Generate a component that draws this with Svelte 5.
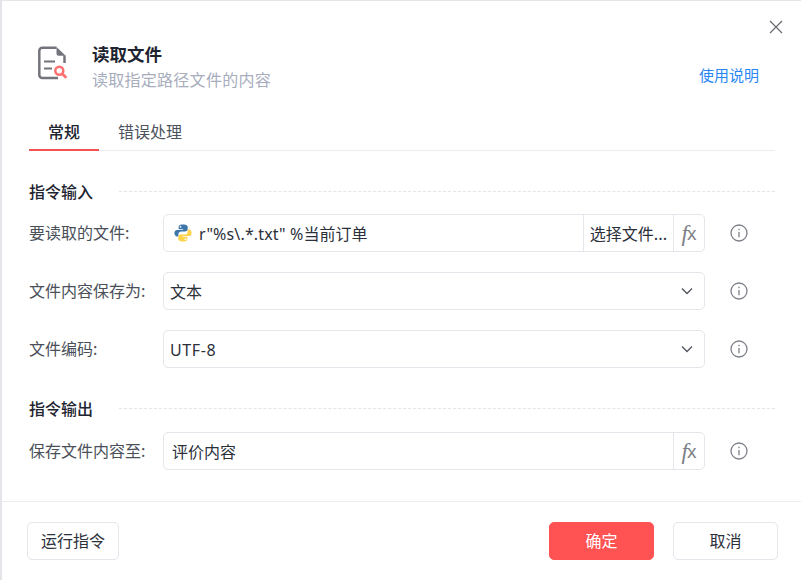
<script>
  const rows1 = [
    { label: '文件内容保存为:', value: '文本', latin: false },
    { label: '文件编码:', value: 'UTF-8', latin: true }
  ];
</script>

{#snippet info()}
  <svg class="info" width="18" height="18" viewBox="0 0 18 18" fill="none" stroke="#7d8087" stroke-width="1.3">
    <circle cx="9" cy="9" r="8" />
    <path d="M9 8v5.2" />
    <path d="M9 4.8v1.4" />
  </svg>
{/snippet}

{#snippet fx()}
  <span class="fx"><i>f</i><span>x</span></span>
{/snippet}

<div class="dialog">
  <button class="close" aria-label="关闭">
    <svg width="14" height="14" viewBox="0 0 14 14" stroke="#6b6d72" stroke-width="1.3" fill="none">
      <path d="M1 1l12 12M13 1L1 13" />
    </svg>
  </button>

  <header class="head">
    <svg class="logo" width="32" height="35" viewBox="0 0 32 35" fill="none">
      <path d="M19.500 1.800H5.300a3 3 0 0 0-3 3v24.200a3 3 0 0 0 3 3H21" stroke="#74757c" stroke-width="2.500" />
      <path d="M27.500 17V9.500" stroke="#74757c" stroke-width="2.500" />
      <path d="M19.500 1L28.700 9.800H21.500a2 2 0 0 1-2-2z" fill="#74757c" />
      <path d="M7 15.500h11M7 22.500h8" stroke="#74757c" stroke-width="2.200" />
      <circle cx="22.300" cy="24.700" r="4" stroke="#ff6f6f" stroke-width="2.500" />
      <path d="M25.300 27.800l4 3.900" stroke="#ff6f6f" stroke-width="2.800" />
    </svg>
    <div class="titles">
      <h1>读取文件</h1>
      <p>读取指定路径文件的内容</p>
    </div>
    <a class="help" href="#help">使用说明</a>
  </header>

  <nav class="tabs">
    <span class="tab active">常规</span>
    <span class="tab">错误处理</span>
  </nav>

  <section class="form">
    <div class="section-title first"><strong>指令输入</strong><span class="dash"></span></div>

    <div class="row">
      <label for="f1">要读取的文件:</label>
      <div class="control">
        <svg class="py" width="18" height="18" viewBox="0 0 18 18">
          <path d="M8.900 0.500C5.400 0.500 4.600 2 4.600 3.300v1.900h4.500v.7H2.900C1.400 5.900 0.400 7.200 0.400 9.100s1 3.300 2.400 3.300h1.600v-2.100c0-1.600 1.300-2.900 2.900-2.900h4.200c1.200 0 2.200-1 2.200-2.300V3c0-1.300-1.100-2.500-4.800-2.500z" fill="#3d77aa" />
          <circle cx="6.500" cy="2.800" r=".9" fill="#fff" />
          <path d="M9.100 17.500c3.500 0 4.300-1.500 4.300-2.800v-1.900H8.900v-.7h6.200c1.500 0 2.500-1.300 2.500-3.200s-1-3.300-2.400-3.300h-1.600v2.100c0 1.600-1.300 2.900-2.900 2.900H6.500c-1.200 0-2.200 1-2.200 2.300V15c0 1.300 1.100 2.500 4.800 2.500z" fill="#fdd34a" />
          <circle cx="11.500" cy="15.200" r=".9" fill="#fff" />
        </svg>
        <span class="value" id="f1"><span class="latin">r"%s\.*.txt" %</span>当前订单</span>
        <span class="cell pick">选择文件...</span>
        <span class="cell fxcell">{@render fx()}</span>
      </div>
      {@render info()}
    </div>

    {#each rows1 as row}
      <div class="row">
        <label for={row.label}>{row.label}</label>
        <div class="control select">
          <span class="value" class:latin={row.latin} id={row.label}>{row.value}</span>
          <svg class="chev" width="12" height="8" viewBox="0 0 12 8" fill="none" stroke="#50555e" stroke-width="1.3">
            <path d="M1 1.500l5 5 5-5" />
          </svg>
        </div>
        {@render info()}
      </div>
    {/each}

    <div class="section-title second"><strong>指令输出</strong><span class="dash"></span></div>

    <div class="row">
      <label for="f4">保存文件内容至:</label>
      <div class="control">
        <span class="value plain" id="f4">评价内容</span>
        <span class="cell fxcell">{@render fx()}</span>
      </div>
      {@render info()}
    </div>
  </section>

  <footer class="foot">
    <button class="btn run">运行指令</button>
    <div class="right">
      <button class="btn primary">确定</button>
      <button class="btn cancel">取消</button>
    </div>
  </footer>
</div>

<style>
  :global(body) {
    margin: 0;
    background: #fff;
  }
  .dialog {
    position: relative;
    box-sizing: border-box;
    width: 801px;
    height: 580px;
    background: #fff;
    border-top: 1px solid #e4e5e9;
    border-left: 2px solid #e4e5e9;
    font-family: "Noto Sans CJK SC", "Noto Sans", sans-serif;
    color: #2b303a;
    display: flex;
    flex-direction: column;
    overflow: hidden;
  }
  .close {
    position: absolute;
    top: 19px;
    right: 18px;
    padding: 0;
    border: 0;
    background: none;
    width: 14px;
    height: 14px;
    display: flex;
  }
  .head {
    display: flex;
    align-items: flex-start;
    height: 115px;
    box-sizing: border-box;
    padding: 43px 42px 0 35px;
  }
  .logo {
    flex: none;
    margin-top: 2px;
  }
  .titles {
    margin-left: 23px;
    flex: 1;
  }
  h1 {
    margin: 0;
    font-size: 17.5px;
    line-height: 20px;
    font-weight: 700;
    color: #1e2430;
  }
  .titles p {
    margin: 5px 0 0;
    font-size: 16px;
    letter-spacing: .27px;
    line-height: 21px;
    color: #a7adbd;
  }
  .help {
    margin-top: 21px;
    font-size: 15px;
    line-height: 20px;
    color: #2a86f3;
    text-decoration: none;
  }
  .tabs {
    display: flex;
    margin: 0 26px 0 27px;
    height: 35px;
    border-bottom: 1px solid #ebecf2;
    box-sizing: border-box;
  }
  .tab {
    font-size: 16px;
    line-height: 30px;
    height: 35px;
    box-sizing: border-box;
    color: #4d535e;
    margin-left: 19px;
  }
  .tab.active {
    width: 70px;
    margin-left: 0;
    text-align: center;
    color: #1e2430;
    font-weight: 500;
    border-bottom: 2px solid #f55353;
  }
  .form {
    flex: 1;
    padding: 0 26px 0 27px;
  }
  .section-title {
    display: flex;
    align-items: center;
    height: 20px;
    margin-top: 30px;
    margin-bottom: 13px;
  }
  .section-title.second {
    margin-bottom: 14px;
  }
  .section-title strong {
    font-size: 16px;
    font-weight: 500;
    color: #1e2430;
    line-height: 20px;
  }
  .dash {
    flex: 1;
    margin-left: 26px;
    border-top: 1px dashed #e3e5ea;
  }
  .row {
    display: flex;
    align-items: center;
    height: 38px;
    margin-bottom: 20px;
  }
  .row:last-child {
    margin-bottom: 0;
  }
  label {
    width: 134px;
    flex: none;
    font-size: 16px;
    line-height: 36px;
    height: 38px;
    color: #4a4f59;
  }
  .control {
    width: 542px;
    height: 38px;
    flex: none;
    box-sizing: border-box;
    border: 1px solid #e4e6eb;
    border-radius: 5px;
    display: flex;
    align-items: center;
    font-size: 16px;
    line-height: 36px;
    color: #2b303a;
  }
  .py {
    margin-left: 10px;
    flex: none;
  }
  .value {
    flex: 1;
    margin-left: 7px;
    font-family: "Noto Sans", "Noto Sans CJK SC", sans-serif;
    white-space: nowrap;
    height: 36px;
    line-height: 38px;
  }
  .latin {
    letter-spacing: .15px;
  }
  .value.latin {
    letter-spacing: .6px;
  }
  .value.plain {
    margin-left: 8px;
  }
  .select .value {
    margin-left: 6px;
  }
  .chev {
    margin-right: 11px;
  }
  .cell {
    height: 100%;
    display: flex;
    align-items: center;
    justify-content: center;
    border-left: 1px solid #e4e6eb;
    box-sizing: border-box;
    flex: none;
  }
  .pick {
    width: 90px;
    font-size: 16px;
    white-space: nowrap;
  }
  .fxcell {
    width: 31px;
  }
  .fx {
    font-family: "Liberation Serif", serif;
    font-size: 23px;
    color: #7c7f86;
    line-height: 1;
    display: inline-flex;
  }
  .fx i {
    font-style: italic;
  }
  .fx span {
    font-family: "Liberation Sans", sans-serif;
    font-size: 19px;
    margin-top: 2px;
    margin-left: -1px;
  }
  .info {
    margin-left: 25px;
    flex: none;
  }
  .foot {
    height: 79px;
    box-sizing: border-box;
    border-top: 1px solid #ebecf0;
    padding: 20px 23px 0 25px;
    display: flex;
    align-items: flex-start;
    justify-content: space-between;
  }
  .right {
    display: flex;
    gap: 19px;
  }
  .btn {
    height: 38px;
    box-sizing: border-box;
    border: 1px solid #e4e6eb;
    border-radius: 5px;
    background: #fff;
    font-family: inherit;
    font-size: 16px;
    line-height: 34px;
    color: #2b303a;
    padding: 0 0 2px;
  }
  .run {
    width: 92px;
  }
  .primary {
    width: 105px;
    background: #ff5252;
    border-color: #ff5252;
    color: #fff;
  }
  .cancel {
    width: 105px;
  }
</style>
